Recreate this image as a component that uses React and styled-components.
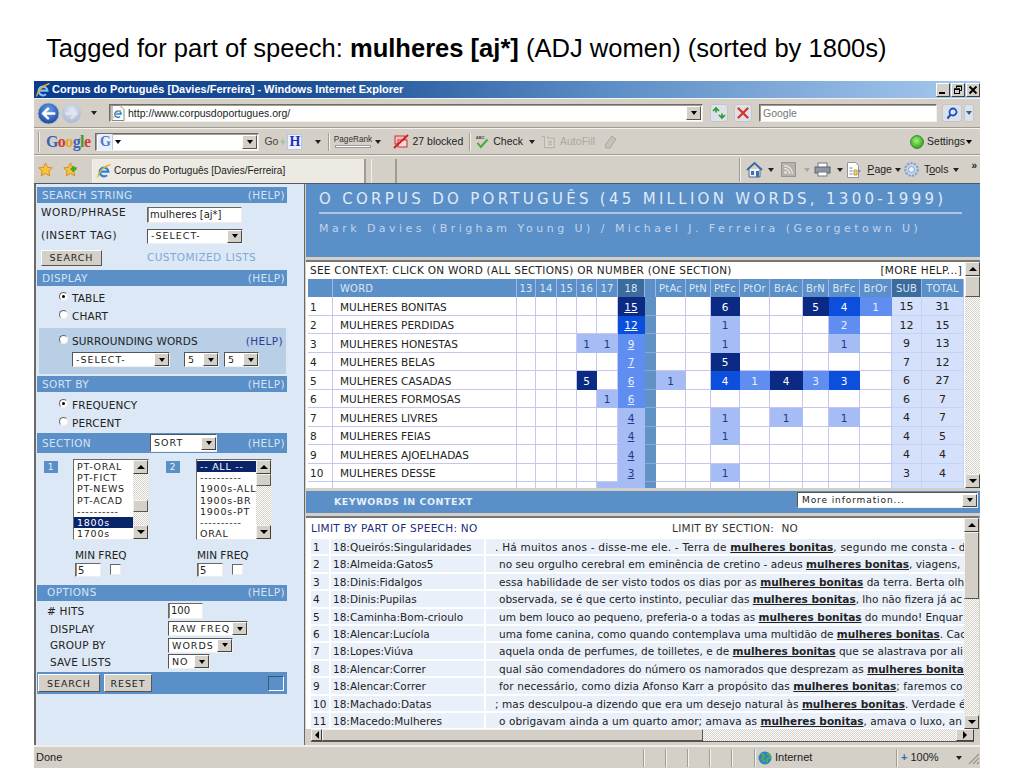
import React from "react";
import styled, { createGlobalStyle, css } from "styled-components";

const Global = createGlobalStyle`
  html, body { margin: 0; padding: 0; background: #fff; }
  body { width: 1024px; height: 768px; overflow: hidden; font-family: "Liberation Sans", Arial, sans-serif; }
  * { box-sizing: border-box; }
`;

const CHROME = '#d4d0c8';
const BLUE = '#5b8fc7';
const UI = '"DejaVu Sans", Verdana, sans-serif';

const Heading = styled.h1`
  margin: 0; height: 81px; padding: 34px 0 0 46px;
  font: 400 25.55px/28px "Liberation Sans", Arial, sans-serif; color: #000; white-space: nowrap;
  b { font-weight: 700; }
`;
const Win = styled.div`
  margin-left: 34px; width: 946px; height: 687px; display: flex; flex-direction: column;
  background: ${CHROME}; overflow: hidden; font-family: "Liberation Sans", Arial, sans-serif;
`;
const Title = styled.div`
  height: 17px; flex: none; display: flex; align-items: center; padding: 0 0 0 1px; gap: 1px;
  background: linear-gradient(90deg, #0a3b8c 0%, #1d5198 30%, #5b8cc4 60%, #a6caf0 100%);
  color: #fff; font: 700 11px/17px "Liberation Sans", sans-serif;
`;
const TitleText = styled.span` flex: 1; `;
const WinBtns = styled.div` display: flex; gap: 1px; `;
const WinBtn = styled.div`
  width: 14px; height: 14px; background: ${CHROME}; border: 1px solid; border-color: #fff #404040 #404040 #fff;
  display: flex; align-items: center; justify-content: center;
`;
const Bar = styled.div`
  flex: none; height: ${p => p.$h}px; display: flex; align-items: center; position: relative;
  border-top: 1px solid #f4f2ec; border-bottom: ${p => p.$flat ? 0 : '1px solid #9d9a90'};
  font-size: 10.5px; color: #222;
`;
const Gap = styled.span` flex: none; width: ${p => p.$w}px; `;
const Grow = styled.span` flex: 1; `;
const Caret = styled.span`
  flex: none; width: 0; height: 0; border: 3px solid transparent; border-top: 4px solid ${p => p.$c || '#222'}; border-bottom: 0;
  margin-left: ${p => p.$ml || 0}px;
`;
const Inset = styled.div`
  flex: none; width: ${p => p.$w}px; height: ${p => p.$h || 18}px; background: #fff; display: flex; align-items: center;
  border: 1px solid; border-color: #6f6c64 #f2f0ea #f2f0ea #6f6c64; box-shadow: inset 1px 1px 0 #a09c92;
  font: 10.5px/1 "Liberation Sans", sans-serif; color: ${p => p.$c || '#222'}; padding-left: ${p => p.$pl || 2}px; overflow: hidden;
`;
const Drop = styled.div`
  flex: none; width: 15px; height: 14px; background: ${CHROME}; border: 1px solid; border-color: #fff #555 #555 #fff;
  display: flex; align-items: center; justify-content: center; margin-left: auto; margin-right: 1px;
`;
const GlassBtn = styled.div`
  flex: none; width: ${p => p.$w || 18}px; height: 18px; border-radius: 3px; background: #dde2ea; border: 1px solid #c3c6ca;
  display: flex; align-items: center; justify-content: center;
`;
const ToolText = styled.span`
  flex: none; font: 10.5px/1 "Liberation Sans", sans-serif; color: ${p => p.$c || '#222'}; white-space: nowrap; margin-left: ${p => p.$ml || 0}px;
  u { text-decoration: underline; }
`;
const Overflow = styled(ToolText)` font-weight: 700; font-size: 10px; margin: -8px 3px 0 0; `;
const GoogleLogo = styled.span`
  flex: none; font: 700 16px/1 "Liberation Serif", serif; letter-spacing: -.6px;
`;
const GLetter = styled.span` color: ${p => p.$c}; `;
const Sep = styled.span` flex: none; width: 2px; height: ${p => p.$h || 18}px; border-left: 1px solid #a09c92; border-right: 1px solid #f4f2ec; `;
const GBoxTile = styled.span`
  flex: none; width: 15px; height: 16px; font: 700 14px/15px "Liberation Serif", serif; color: #4a78d0; text-align: center; background: #e8eefa; border-right: 1px solid #c0c8dc;
`;
const HBtn = styled.span` flex: none; width: 15px; height: 16px; background: #eef2ff; border: 1px solid #b8c4ea; color: #2030c0; font: 700 14px/14px "Liberation Serif", serif; text-align: center; `;
const PageRankBox = styled.span`
  flex: none; display: flex; flex-direction: column; align-items: center; gap: 1px; font: 8.2px/9px "Liberation Sans", sans-serif; width: 39px; color: #333;
`;
const PageRankMeter = styled.span` width: 36px; height: 3px; background: #fff; border: 1px solid #999; `;
const TabItem = styled.div`
  flex: none; width: 274px; height: 24px; align-self: flex-end; background: #eceae3; display: flex; align-items: center; padding-left: 3px; gap: 2px;
  border-right: 2px solid #a09c92; border-left: 1px solid #f4f2ec; font: 10px/1 "Liberation Sans", sans-serif; color: #222;
`;
const NewTab = styled.div` flex: none; width: 26px; height: 24px; align-self: flex-end; border-left: 1px solid #f4f2ec; border-right: 2px solid #a09c92; `;

const Body = styled.div` flex: none; height: 562px; display: flex; border-top: 1px solid #4a5a66; `;
const Left = styled.aside`
  flex: none; width: 271px; background: #dce8f5; border-left: 2px solid #6c6a64; border-right: 1px solid #6c6a64; padding: 3px 0 0 1px;
  font: 10.5px/1 ${UI}; letter-spacing: .55px; color: #222;
`;
const SecBar = styled.div`
  width: 250px; height: ${p => p.$h || 16}px; margin-top: ${p => p.$mt || 0}px; background: ${BLUE}; display: flex; align-items: center; justify-content: space-between;
  padding: 0 2px 0 ${p => p.$pl || 5}px; color: #d5e4f5; font: 10.5px/1 ${UI}; letter-spacing: .4px;
`;
const SecName = styled.span` flex: none; width: 108px; `;
const SecHelp = styled.span` margin-left: auto; `;
const FieldRow = styled.div`
  display: flex; align-items: center; height: ${p => p.$h}px; margin-top: ${p => p.$mt || 0}px; padding-left: ${p => p.$pl || 4}px;
`;
const FieldLabel = styled.span` flex: none; width: ${p => p.$w}px; padding-bottom: ${p => p.$pb || 0}px; `;
const TextBox = styled.div`
  flex: none; width: ${p => p.$w}px; height: ${p => p.$h || 16}px; background: #fff; border: 1px solid; border-color: #6b6860 #eee #eee #6b6860; box-shadow: inset 1px 0 0 #888;
  padding-left: 2px; font: 10px/14px ${UI}; letter-spacing: 0; color: #222;
`;
const SelectBox = styled.div`
  flex: none; width: ${p => p.$w}px; height: ${p => p.$h || 15}px; background: #fff; display: flex; align-items: center; justify-content: space-between;
  border: 1px solid; border-color: #555 #f0f0f0 #f0f0f0 #555; padding-left: 3px; margin-left: ${p => p.$ml || 0}px;
  font: 9.5px/1 ${UI}; letter-spacing: 1px; color: #222;
`;
const ArrowTile = styled.span`
  flex: none; width: 15px; height: 13px; background: ${CHROME}; border: 1px solid; border-color: #fff #444 #444 #fff; margin-right: 0;
  display: flex; align-items: center; justify-content: center;
  &::after { content: ""; border: 3px solid transparent; border-top: 4px solid #000; border-bottom: 0; }
`;
const Btn = styled.div`
  flex: none; width: ${p => p.$w}px; height: ${p => p.$h || 17}px; background: ${CHROME}; border: 1px solid; border-color: #fff #555 #555 #fff;
  display: flex; align-items: center; justify-content: center; font: 9.5px/1 ${UI}; letter-spacing: .9px; color: #222;
`;
const CustomLink = styled.span` margin-left: 45px; color: #7fa8d8; letter-spacing: .42px; font-size: 10.5px; `;
const VSpace = styled.div` height: ${p => p.$h}px; `;
const RadioRow = styled.label`
  display: flex; align-items: center; height: ${p => p.$h || 18}px; padding-left: ${p => p.$pl || 22}px; gap: 4px; letter-spacing: .15px;
`;
const Radio = styled.span`
  flex: none; width: 9px; height: 9px; border-radius: 50%; background: #fff; border: 1px solid; border-color: #666 #eee #eee #666; position: relative; top: -2px;
  ${p => p.$on && css`&::after { content: ""; position: absolute; left: 2px; top: 2px; width: 3px; height: 3px; border-radius: 50%; background: #000; }`}
`;
const SurroundBox = styled.div`
  width: 247px; height: 46px; margin: 3px 0 2px 2px; background: #b8cfe6; padding-top: 6px;
`;
const SurroundHead = styled.div` display: flex; align-items: center; padding-left: 20px; height: 14px; gap: 4px; letter-spacing: .1px; `;
const NavyHelp = styled.span` color: #2a3f9a; margin-left: auto; margin-right: 3px; letter-spacing: .4px; `;
const SurroundSelects = styled.div` display: flex; margin: 4px 0 0 33px; `;
const Lists = styled.div` display: flex; height: 81px; margin: 6px 0 0 7px; `;
const ListCol = styled.div` flex: none; width: 122px; display: flex; align-items: flex-start; `;
const Badge = styled.span`
  flex: none; width: 14px; height: 12px; margin-top: 2px; background: ${BLUE}; color: #e4effa; font: 9px/12px ${UI}; text-align: center;
`;
const ListBox = styled.div`
  flex: none; width: 76px; height: 81px; margin-left: ${p => p.$ml}px; background: #fff; display: flex; border: 1px solid; border-color: #6b6860 #e8e8e8 #e8e8e8 #6b6860;
`;
const ListItems = styled.div` flex: 1; min-width: 0; padding: 1px 0 0 0; overflow: hidden; `;
const ListOpt = styled.div`
  height: 11.2px; padding-left: 3px; font: 9.5px/11.2px ${UI}; letter-spacing: .75px; white-space: nowrap;
  ${p => p.$on ? 'background:#0a246a;color:#fff;' : 'color:#222;'}
`;
const MinRow = styled.div` display: flex; margin: 10px 0 0 0; `;
const MinCol = styled.div` flex: none; width: 122px; padding-left: ${p => p.$pl}px; letter-spacing: 0; `;
const MinInputs = styled.div` display: flex; align-items: center; gap: 9px; margin-top: 2px; `;
const Check = styled.span` flex: none; width: 11px; height: 11px; background: #fff; border: 1px solid; border-color: #666 #eee #eee #666; `;
const OptRow = styled.div` display: flex; align-items: center; height: ${p => p.$h || 16.6}px; margin-top: ${p => p.$mt || 0}px; padding-left: ${p => p.$pl || 13}px; letter-spacing: .2px; `;
const OptLabel = styled.span` flex: none; width: ${p => 131 - (p.$pl || 13)}px; `;
const ActionBar = styled.div`
  width: 250px; height: 22px; margin-top: 2px; background: ${BLUE}; display: flex; align-items: center; padding: 0 3px 0 1px; gap: 4px;
`;
const Square = styled.span` flex: none; width: 16px; height: 15px; margin-left: auto; background: ${BLUE}; border: 1px solid; border-color: #34587e #fff #fff #34587e; `;

const Right = styled.main` flex: 1; min-width: 0; display: flex; flex-direction: column; padding-left: 1px; background: ${CHROME}; `;
const TopBanner = styled.header`
  flex: none; height: 73px; background: ${BLUE}; padding: 7px 0 0 13px; color: #dfeafa;
`;
const BannerTitle = styled.div` font: 15px/17px ${UI}; letter-spacing: 3.29px; white-space: nowrap; padding-bottom: 4px; width: 643px; border-bottom: 2px solid #a9c6e6; `;
const BannerSub = styled.div` font: 11px/14px ${UI}; letter-spacing: 3.46px; color: #c0d4ec; margin-top: 8px; white-space: nowrap; `;
const TableFrame = styled.section`
  flex: none; height: 228px; margin-top: 3px; display: flex; background: #fff; border-top: 2px solid #777; overflow: hidden;
`;
const TableMain = styled.div` flex: none; width: 659px; padding-left: 2px; font: 10.5px/1 ${UI}; color: #222; `;
const SeeRow = styled.div` height: 17px; display: flex; align-items: center; justify-content: space-between; padding: 0 3px 0 2px; letter-spacing: .26px; `;
const Grid = styled.div`
  display: grid; grid-template-columns: 25px 184px 19px 21px 20px 20px 21px 27px 11px 30px 25px 29px 30px 33px 26px 31px 32px 30px 42px;
  grid-template-rows: 18px; grid-auto-rows: 18.5px; width: 656px;
`;
const TONES = {
  d: 'background:#0a2a84;color:#fff;border-color:#0a2a84;',
  s: 'background:#0c4fdc;color:#fff;border-color:#0c4fdc;',
  m: 'background:#5f8df0;color:#e8f0ff;border-color:#5f8df0;',
  l: 'background:#a5bcf5;color:#1d3a86;border-color:#a5bcf5;',
};
const HeadCell = styled.div`
  background: ${p => p.$dark ? '#3c6c9c' : BLUE}; color: #dbe7f6; border-right: 1px solid #9db5f0; display: flex; align-items: center; padding-top: 2px;
  justify-content: ${p => p.$left ? 'flex-start' : 'center'}; padding-left: ${p => p.$left ? 7 : 0}px; letter-spacing: .2px; font-size: 10px;
`;
const Cell = styled.div`
  display: flex; align-items: center; justify-content: ${p => p.$left ? 'flex-start' : 'center'}; padding-left: ${p => p.$pl || 0}px; padding-top: 2px;
  border-right: 1px solid #c9c5ef; border-bottom: 1px solid #c9c5ef; background: #fff; white-space: nowrap;
  ${p => p.$tone && TONES[p.$tone]}
  ${p => p.$spacer && `background:#6092c6;border-right:0;border-bottom:1px solid #85a8d4;`}
  ${p => p.$sum && `background:#d5e0fa;color:#222;border-right:1px solid #c4d2f6;border-bottom:1px solid #c4d2f6;font-size:11px;`}
  u { text-decoration: underline; }
`;
const VBar = styled.div` flex: none; width: ${p => p.$w || 15}px; display: flex; flex-direction: column; background: repeating-conic-gradient(#d4d0c8 0 25%, #fff 0 50%) 0 0/2px 2px; `;
const VTrack = styled.div` flex: 1; min-height: 0; `;
const Thumb = styled.div`
  height: ${p => p.$h}px; margin-top: ${p => p.$top}px; background: ${CHROME}; border: 1px solid; border-color: #f4f2ec #555 #555 #f4f2ec;
`;
const ScrollBtn = styled.div`
  flex: none; width: ${p => p.$w || 15}px; height: ${p => p.$hh || 14}px; background: ${CHROME}; border: 1px solid; border-color: #f4f2ec #404040 #404040 #f4f2ec;
  display: flex; align-items: center; justify-content: center;
  &::after { content: ""; border: 4px solid transparent;
    ${p => p.$dir === 'up' && 'border-bottom:4px solid #000;border-top:0;'}
    ${p => p.$dir === 'down' && 'border-top:4px solid #000;border-bottom:0;'}
    ${p => p.$dir === 'left' && 'border-right:4px solid #000;border-left:0;'}
    ${p => p.$dir === 'right' && 'border-left:4px solid #000;border-right:0;'}
  }
`;
const KwicBar = styled.div`
  flex: none; height: 22px; margin-top: 3px; background: ${BLUE}; display: flex; padding: 1px 2px 0 28px; justify-content: space-between; align-items: flex-start;
  color: #e6effa;
`;
const KwicTitle = styled.span` font: 700 9.5px/20px ${UI}; letter-spacing: .5px; `;
const MoreSel = styled(SelectBox)` font-size: 9px; letter-spacing: .9px; height: 16px; padding-left: 4px; `;
const KwicFrame = styled.section`
  flex: 1; min-height: 0; margin-top: 3px; display: flex; flex-direction: column; background: ${CHROME}; border-top: 2px solid #777; border-right: 1px solid ${CHROME}; padding-bottom: 3px;
`;
const KwicTop = styled.div` flex: 1; min-height: 0; display: flex; background: #fff; `;
const KwicMain = styled.div` flex: none; width: 658px; padding: 3px 0 0 5px; overflow: hidden; font: 10.5px/1 ${UI}; color: #222; `;
const LimitRow = styled.div` height: 14px; display: flex; align-items: center; color: #222a7e; margin-bottom: 4px; letter-spacing: .3px; `;
const LimitLeft = styled.span` flex: none; width: 361px; `;
const LimitRight = styled.span` color: #333; letter-spacing: .3px; `;
const KwicRow = styled.div` display: grid; grid-template-columns: 18px 153px 480px; column-gap: 2px; height: 15.4px; margin-bottom: 2px; `;
const KwicCell = styled.div`
  background: #eaf0f9; padding: 1px 0 0 ${p => p.$pl || 2}px; white-space: nowrap; overflow: hidden; line-height: 14.4px; letter-spacing: ${p => p.$ls || 0}px;
  b { font-weight: 700; text-decoration: underline; letter-spacing: 0; }
`;
const HBar = styled.div`
  flex: none; height: 13px; display: flex; margin-left: 5px; width: 663px; background: repeating-conic-gradient(#d4d0c8 0 25%, #fff 0 50%) 0 0/2px 2px; border-bottom: 1px solid #555;
`;
const HThumb = styled.div` flex: none; width: 381px; background: ${CHROME}; border: 1px solid; border-color: #f4f2ec #555 #555 #f4f2ec; `;
const Status = styled.footer`
  flex: 1; display: flex; align-items: center; border-top: 2px solid #f0eee8; font: 11px/1 "Liberation Sans", sans-serif; color: #222; padding: 0 0 0 2px;
`;
const DoneText = styled.span` flex: none; width: 607px; `;
const StatusCell = styled.span`
  flex: none; width: ${p => p.$w}px; height: 18px; border-left: 1px solid #a09c92; box-shadow: inset 1px 0 0 #f4f2ec; display: flex; align-items: center; gap: 3px; padding-left: ${p => p.$pl || 0}px;
`;
const ZoomPlus = styled.span` color: #2a6fc0; font-weight: 700; `;

const Ie = ({ s = 14, c = '#2b80d8' }) => (
  <svg width={s} height={s} viewBox="0 0 16 16" style={{ flex: 'none' }}>
    <path d="M4 8.6h8.4A4.4 4.4 0 1 0 11 12.2" fill="none" stroke={c} strokeWidth="2.2" />
    <path d="M1.5 14.5C2 10 7 3.5 14.5 1.5" fill="none" stroke="#eeb02c" strokeWidth="1.3" />
  </svg>
);
const NavBall = ({ dim, s = 23, dir = 'l' }) => (
  <svg width={s} height={s} viewBox="0 0 24 24" style={{ flex: 'none' }}>
    <defs>
      <radialGradient id={dim ? 'nd' : 'nb'} cx=".5" cy=".35" r=".7">
        <stop offset="0" stopColor={dim ? '#e4e9f2' : '#6fa2e8'} />
        <stop offset="1" stopColor={dim ? '#a3b3cb' : '#123f9c'} />
      </radialGradient>
    </defs>
    <circle cx="12" cy="12" r="11" fill={`url(#${dim ? 'nd' : 'nb'})`} stroke={dim ? '#c4ccd8' : '#a9b6cc'} />
    <path d="M18 12H7M11.5 7L6.5 12l5 5" fill="none" stroke={dim ? '#dfe6f2' : '#fff'} strokeWidth="2.6" strokeLinecap="round" transform={dir === 'r' ? 'matrix(-1 0 0 1 24 0)' : undefined} />
  </svg>
);
const PageIe = () => (
  <svg width="14" height="16" viewBox="0 0 14 16" style={{ flex: 'none' }}>
    <path d="M1 .5h8l4 4v11H1z" fill="#fff" stroke="#888" />
    <path d="M4 9h6.2A3.2 3.2 0 1 0 9.2 11.5" fill="none" stroke="#2b80d8" strokeWidth="1.5" />
    <path d="M2.5 13C3.5 9.5 6 6.5 10.5 5" fill="none" stroke="#eeb02c" />
  </svg>
);
const Refresh = () => (
  <svg width="14" height="14" viewBox="0 0 14 14"><path d="M1 5l3-3 3 3M4 2.5v4M13 9l-3 3-3-3M10 11.5v-4" fill="none" stroke="#2c9a3a" strokeWidth="1.7" /></svg>
);
const Stop = () => (
  <svg width="12" height="12" viewBox="0 0 12 12"><path d="M1.5 1.5l9 9M10.5 1.5l-9 9" stroke="#d9352a" strokeWidth="2.4" strokeLinecap="round" /></svg>
);
const Glass = () => (
  <svg width="12" height="13" viewBox="0 0 12 13"><circle cx="7" cy="5" r="3.5" fill="#dbe8fb" stroke="#1b50c4" strokeWidth="1.8" /><path d="M4.5 7.6L1.5 11.5" stroke="#1b50c4" strokeWidth="2.2" /></svg>
);
const Leaf = () => (
  <svg width="8" height="10" viewBox="0 0 8 10" style={{ flex: 'none' }}><path d="M1 5c2-1 2-3 3-4 0 2 1 3 3 4-2 1-3 2-3 4-1-2-1-3-3-4z" fill="#a9c4a2" /></svg>
);
const Blocked = () => (
  <svg width="16" height="16" viewBox="0 0 16 16" style={{ flex: 'none' }}>
    <rect x="2" y="2" width="10" height="8" fill="#f2c0c0" stroke="#cc3030" />
    <rect x="5" y="6" width="9" height="7" fill="#f8d8d8" stroke="#cc3030" />
    <path d="M1 14L15 1" stroke="#d02020" strokeWidth="2" />
  </svg>
);
const CheckIcon = () => (
  <svg width="15" height="16" viewBox="0 0 18 16" style={{ flex: 'none' }}>
    <text x="1" y="5" fontSize="5" fontFamily="Liberation Sans" fontWeight="700" fill="#444">ABC</text>
    <path d="M3 9l4 5 8-9" fill="none" stroke="#4da838" strokeWidth="2.4" />
  </svg>
);
const AutoFillIcon = () => (
  <svg width="15" height="16" viewBox="0 0 16 16" style={{ flex: 'none' }}>
    <path d="M1 2l3 0 0 12 10 0 0-10-7 0 0-2" fill="#dedbd3" stroke="#aaa79e" /><path d="M7 7h5M7 9h5M7 11h5" stroke="#aaa79e" />
  </svg>
);
const Eraser = () => (
  <svg width="16" height="16" viewBox="0 0 16 16" style={{ flex: 'none' }}><path d="M3 11l7-9 4 3-6 9H4z" fill="#c4c1b9" stroke="#aaa79e" /></svg>
);
const GreenDot = () => (
  <svg width="14" height="14" viewBox="0 0 14 14" style={{ flex: 'none' }}>
    <defs><radialGradient id="gd" cx=".45" cy=".4" r=".6"><stop offset="0" stopColor="#a4f07a" /><stop offset="1" stopColor="#2fa31a" /></radialGradient></defs>
    <circle cx="7" cy="7" r="6.4" fill="url(#gd)" stroke="#2c8f2a" />
  </svg>
);
const Star = ({ plus }) => (
  <svg width="15" height="15" viewBox="0 0 16 16" style={{ flex: 'none' }}>
    <path d="M8 1l2.2 4.6 5 .7-3.6 3.4.9 5L8 12.3l-4.5 2.4.9-5L.8 6.3l5-.7z" fill="#f7c43a" stroke="#d68a1c" />
    {plus && <path d="M8 7.5h6M11 4.5v6" stroke="#3eaa2c" strokeWidth="2.6" />}
  </svg>
);
const Home = () => (
  <svg width="17" height="17" viewBox="0 0 17 17" style={{ flex: 'none' }}>
    <path d="M3 8v8h11V8" fill="#eef0f4" stroke="#5c6a80" /><path d="M1 9l7.5-7L16 9" fill="none" stroke="#3a6aa8" strokeWidth="2" /><rect x="5" y="10" width="3" height="4" fill="#3a70b8" /><rect x="10" y="10" width="3" height="6" fill="#3a70b8" />
  </svg>
);
const Rss = () => (
  <svg width="15" height="15" viewBox="0 0 15 15" style={{ flex: 'none' }}>
    <rect x=".5" y=".5" width="14" height="14" fill="#b4b2aa" stroke="#98968e" /><circle cx="4.5" cy="10.5" r="1.4" fill="#e6e4de" /><path d="M3 6.5a5.5 5.5 0 0 1 5.5 5.5M3 3.5A8.5 8.5 0 0 1 11.5 12" fill="none" stroke="#e6e4de" strokeWidth="1.4" />
  </svg>
);
const Printer = () => (
  <svg width="17" height="15" viewBox="0 0 17 15" style={{ flex: 'none' }}>
    <rect x="4" y="1" width="9" height="5" fill="#fff" stroke="#777" /><rect x="1" y="5" width="15" height="6" fill="#8d96a6" stroke="#5a6270" /><rect x="4" y="10" width="9" height="4" fill="#fff" stroke="#777" />
  </svg>
);
const PageIcon = () => (
  <svg width="16" height="16" viewBox="0 0 16 16" style={{ flex: 'none' }}>
    <path d="M1.5 .5h8l3 3v12h-11z" fill="#fff" stroke="#8c98aa" /><path d="M3.5 6h3M3.5 9h3M3.5 12h3" stroke="#7a8aa4" /><path d="M8 8h3v5H8z" fill="#f2d67c" stroke="#b99a3c" /><path d="M12 7l3 2-3 2z" fill="#7a8aa4" />
  </svg>
);
const Gear = () => (
  <svg width="17" height="17" viewBox="0 0 17 17" style={{ flex: 'none' }}>
    <circle cx="8.5" cy="8.5" r="6.2" fill="#cfdcef" stroke="#8ba6cc" strokeWidth="2.4" strokeDasharray="2.4 1" /><circle cx="8.5" cy="8.5" r="3" fill="#f0f4fa" stroke="#7f9cc6" />
  </svg>
);
const Globe = () => (
  <svg width="14" height="14" viewBox="0 0 14 14" style={{ flex: 'none' }}>
    <circle cx="7" cy="7" r="6.5" fill="#2f7fd0" /><path d="M3 3c2 0 3 1 3 2S4 7 4 8s2 1 2 3M9 2c1 1 3 2 3 4s-2 1-3 2 0 3 1 3" fill="none" stroke="#4fb04a" strokeWidth="2" />
  </svg>
);
const Grip = () => (
  <svg width="14" height="14" viewBox="0 0 14 14" style={{ flex: 'none' }}><path d="M13 3L3 13M13 7l-6 6M13 11l-2 2" stroke="#98958c" strokeWidth="1.2" /></svg>
);
const MinGlyph = () => (
  <svg width="10" height="10" viewBox="0 0 10 10"><path d="M1 8h6" stroke="#000" strokeWidth="2" /></svg>
);
const RestoreGlyph = () => (
  <svg width="10" height="10" viewBox="0 0 10 10"><path d="M3.5 1.5h5v4h-2M3.5 1v2" fill="none" stroke="#000" /><rect x="1.5" y="4" width="5" height="4.5" fill="none" stroke="#000" /><path d="M1 4.3h6M3 1.3h6" stroke="#000" strokeWidth="1.4" /></svg>
);
const CloseGlyph = () => (
  <svg width="10" height="10" viewBox="0 0 10 10"><path d="M1.5 1.5l7 7M8.5 1.5l-7 7" stroke="#000" strokeWidth="1.9" /></svg>
);

const COLS = ['13', '14', '15', '16', '17', '18', '', 'PtAc', 'PtN', 'PtFc', 'PtOr', 'BrAc', 'BrN', 'BrFc', 'BrOr'];
const ROWS = [
  { w: 'MULHERES BONITAS', c: { 18: [15, 'd'], PtFc: [6, 'd'], BrN: [5, 'd'], BrFc: [4, 's'], BrOr: [1, 'm'] }, sub: 15, tot: 31 },
  { w: 'MULHERES PERDIDAS', c: { 18: [12, 's'], PtFc: [1, 'l'], BrFc: [2, 'm'] }, sub: 12, tot: 15 },
  { w: 'MULHERES HONESTAS', c: { 16: [1, 'l'], 17: [1, 'l'], 18: [9, 'm'], PtFc: [1, 'l'], BrFc: [1, 'l'] }, sub: 9, tot: 13 },
  { w: 'MULHERES BELAS', c: { 18: [7, 'm'], PtFc: [5, 'd'] }, sub: 7, tot: 12 },
  { w: 'MULHERES CASADAS', c: { 16: [5, 'd'], 18: [6, 'm'], PtAc: [1, 'l'], PtFc: [4, 's'], PtOr: [1, 'm'], BrAc: [4, 'd'], BrN: [3, 'm'], BrFc: [3, 's'] }, sub: 6, tot: 27 },
  { w: 'MULHERES FORMOSAS', c: { 17: [1, 'l'], 18: [6, 'm'] }, sub: 6, tot: 7 },
  { w: 'MULHERES LIVRES', c: { 18: [4, 'l'], PtFc: [1, 'l'], BrAc: [1, 'l'], BrFc: [1, 'l'] }, sub: 4, tot: 7 },
  { w: 'MULHERES FEIAS', c: { 18: [4, 'l'], PtFc: [1, 'l'] }, sub: 4, tot: 5 },
  { w: 'MULHERES AJOELHADAS', c: { 18: [4, 'l'] }, sub: 4, tot: 4 },
  { w: 'MULHERES DESSE', c: { 18: [3, 'l'], PtFc: [1, 'l'] }, sub: 3, tot: 4 },
  { w: '', c: { 17: ['', 'l'], 18: ['', 'l'] }, sub: '', tot: '' },
];
const KWIC = [
  ['18:Queirós:Singularidades', 9, 0.23, '. Há muitos anos - disse-me ele. - Terra de ', ', segundo me consta - di'],
  ['18:Almeida:Gatos5', 13, 0.05, 'no seu orgulho cerebral em eminência de cretino - adeus ', ', viagens, '],
  ['18:Dinis:Fidalgos', 13, 0.06, 'essa habilidade de ser visto todos os dias por as ', ' da terra. Berta olh'],
  ['18:Dinis:Pupilas', 13, 0, 'observada, se é que certo instinto, peculiar das ', ', lho não fizera já ac'],
  ['18:Caminha:Bom-crioulo', 13, 0, 'um bem louco ao pequeno, preferia-o a todas as ', ' do mundo! Enquar'],
  ['18:Alencar:Lucíola', 13, 0, 'uma fome canina, como quando contemplava uma multidão de ', '. Cac'],
  ['18:Lopes:Viúva', 13, 0.02, 'aquela onda de perfumes, de toilletes, e de ', ' que se alastrava por ali'],
  ['18:Alencar:Correr', 13, 0.03, 'qual são comendadores do número os namorados que desprezam as ', ''],
  ['18:Alencar:Correr', 13, 0.1, 'for necessário, como dizia Afonso Karr a propósito das ', '; faremos co'],
  ['18:Machado:Datas', 9, 0.09, '; mas desculpou-a dizendo que era um desejo natural às ', '. Verdade é'],
  ['18:Macedo:Mulheres', 13, 0.07, 'o obrigavam ainda a um quarto amor; amava as ', ', amava o luxo, an'],
];

const VScroll = ({ top, h, w, hh }) => (
  <VBar $w={w}>
    <ScrollBtn $dir="up" $w={w} $hh={hh} />
    <VTrack><Thumb $top={top} $h={h} /></VTrack>
    <ScrollBtn $dir="down" $w={w} $hh={hh} />
  </VBar>
);
const Sel = ({ w, children, ml, h }) => (
  <SelectBox $w={w} $ml={ml} $h={h}><span>{children}</span><ArrowTile /></SelectBox>
);
const Section = ({ name, pl }) => (
  <SecBar $pl={pl}><span>{name}</span><span>(HELP)</span></SecBar>
);

export default function App() {
  return (
    <>
      <Global />
      <Heading>Tagged for part of speech: <b>mulheres [aj*]</b> (ADJ women) (sorted by 1800s)</Heading>
      <Win>
        <Title>
          <Ie s={16} c="#7fc0f4" />
          <TitleText>Corpus do Português [Davies/Ferreira] - Windows Internet Explorer</TitleText>
          <WinBtns><WinBtn><MinGlyph /></WinBtn><WinBtn><RestoreGlyph /></WinBtn><WinBtn><CloseGlyph /></WinBtn></WinBtns>
        </Title>
        <Bar $h={30}>
          <Gap $w={3} /><NavBall /><Gap $w={1} /><NavBall dim dir="r" s={21} /><Caret $ml={9} /><Gap $w={12} />
          <Inset $w={594} $pl={1}>
            <PageIe /><Gap $w={3} />http://www.corpusdoportugues.org/<Drop><Caret $c="#000" /></Drop>
          </Inset>
          <Gap $w={7} /><GlassBtn><Refresh /></GlassBtn><Gap $w={6} /><GlassBtn><Stop /></GlassBtn><Gap $w={7} />
          <Inset $w={178} $c="#777" $pl={3}>Google</Inset>
          <Gap $w={5} /><GlassBtn $w={20}><Glass /></GlassBtn><Gap $w={2} /><GlassBtn $w={10}><Caret $c="#3a5aa0" /></GlassBtn>
        </Bar>
        <Bar $h={27}>
          <Gap $w={4} /><Sep $h={20} /><Gap $w={6} />
          <GoogleLogo><GLetter $c="#3a63b8">G</GLetter><GLetter $c="#d43d2e">o</GLetter><GLetter $c="#e0a820">o</GLetter><GLetter $c="#3a63b8">g</GLetter><GLetter $c="#3f9a3a">l</GLetter><GLetter $c="#d43d2e">e</GLetter></GoogleLogo>
          <Gap $w={5} />
          <Inset $w={164} $pl={0}><GBoxTile>G</GBoxTile><Caret $c="#000" $ml={2} /><Drop><Caret $c="#000" /></Drop></Inset>
          <ToolText $ml={5} $c="#444">Go</ToolText><Gap $w={1} /><Leaf /><HBtn>H</HBtn><Caret $ml={13} /><Gap $w={7} /><Sep /><Gap $w={3} />
          <PageRankBox>PageRank<PageRankMeter /></PageRankBox><Caret $ml={3} /><Gap $w={12} /><Blocked /><ToolText $ml={3}>27 blocked</ToolText><Gap $w={6} /><Sep /><Gap $w={4} />
          <CheckIcon /><ToolText $ml={3}>Check</ToolText><Caret $ml={6} /><Gap $w={6} /><AutoFillIcon /><ToolText $ml={4} $c="#aaa79e">AutoFill</ToolText><Gap $w={7} /><Eraser />
          <Grow /><GreenDot /><ToolText $ml={3}>Settings</ToolText><Caret $c="#000" $ml={1} /><Gap $w={8} />
        </Bar>
        <Bar $h={28} $flat>
          <Gap $w={4} /><Star /><Gap $w={10} /><Star plus /><Gap $w={14} />
          <TabItem><Ie s={16} /><span>Corpus do Português [Davies/Ferreira]</span></TabItem>
          <Gap $w={5} /><NewTab />
          <Grow />
          <Sep $h={24} /><Gap $w={5} /><Home /><Caret $ml={5} /><Gap $w={7} /><Rss /><Caret $c="#aaa79e" $ml={8} /><Gap $w={4} /><Printer /><Caret $ml={6} /><Gap $w={3} /><PageIcon />
          <ToolText $ml={5}><u>P</u>age</ToolText><Caret $ml={3} /><Gap $w={2} /><Gear /><ToolText $ml={4}>T<u>o</u>ols</ToolText><Caret $ml={5} /><Gap $w={12} />
          <Overflow>»</Overflow>
        </Bar>
        <Body>
          <Left>
            <Section name="SEARCH STRING" />
            <FieldRow $h={19} $mt={2}><FieldLabel $w={106} $pb={4}>WORD/PHRASE</FieldLabel><TextBox $w={95}>mulheres [aj*]</TextBox></FieldRow>
            <FieldRow $h={16} $mt={4}><FieldLabel $w={106} $pb={2}>(INSERT TAG)</FieldLabel><Sel w={96}>-SELECT-</Sel></FieldRow>
            <FieldRow $h={17} $mt={5}><Btn $w={61} $h={16}>SEARCH</Btn><CustomLink>CUSTOMIZED LISTS</CustomLink></FieldRow>
            <SecBar $mt={4} $h={16}><span>DISPLAY</span><span>(HELP)</span></SecBar>
            <VSpace $h={3} />
            <RadioRow><Radio $on />TABLE</RadioRow>
            <RadioRow><Radio />CHART</RadioRow>
            <SurroundBox>
              <SurroundHead><Radio />SURROUNDING WORDS<NavyHelp>(HELP)</NavyHelp></SurroundHead>
              <SurroundSelects><Sel w={98}>-SELECT-</Sel><Sel w={35} ml={14}>5</Sel><Sel w={35} ml={5}>5</Sel></SurroundSelects>
            </SurroundBox>
            <Section name="SORT BY" />
            <VSpace $h={4} />
            <RadioRow><Radio $on />FREQUENCY</RadioRow>
            <RadioRow><Radio />PERCENT</RadioRow>
            <SecBar $h={20} $mt={1}>
              <SecName>SECTION</SecName><SelectBox $w={67} $h={18}><span>SORT</span><ArrowTile /></SelectBox><SecHelp>(HELP)</SecHelp>
            </SecBar>
            <Lists>
              <ListCol>
                <Badge>1</Badge>
                <ListBox $ml={15}>
                  <ListItems>
                    <ListOpt>PT-ORAL</ListOpt><ListOpt>PT-FICT</ListOpt><ListOpt>PT-NEWS</ListOpt><ListOpt>PT-ACAD</ListOpt><ListOpt>----------</ListOpt><ListOpt $on>1800s</ListOpt><ListOpt>1700s</ListOpt>
                  </ListItems>
                  <VScroll top={26} h={12} w={15} hh={14} />
                </ListBox>
              </ListCol>
              <ListCol>
                <Badge>2</Badge>
                <ListBox $ml={16}>
                  <ListItems>
                    <ListOpt $on>-- ALL --</ListOpt><ListOpt>----------</ListOpt><ListOpt>1900s-ALL</ListOpt><ListOpt>1900s-BR</ListOpt><ListOpt>1900s-PT</ListOpt><ListOpt>----------</ListOpt><ListOpt>ORAL</ListOpt>
                  </ListItems>
                  <VScroll top={0} h={12} w={15} hh={14} />
                </ListBox>
              </ListCol>
            </Lists>
            <MinRow>
              <MinCol $pl={38}>MIN FREQ<MinInputs><TextBox $w={26} $h={14}>5</TextBox><Check /></MinInputs></MinCol>
              <MinCol $pl={38}>MIN FREQ<MinInputs><TextBox $w={26} $h={14}>5</TextBox><Check /></MinInputs></MinCol>
            </MinRow>
            <VSpace $h={8} />
            <Section name="OPTIONS" pl={10} />
            <OptRow $pl={10} $h={19} $mt={1}><OptLabel $pl={10}># HITS</OptLabel><TextBox $w={35}>100</TextBox></OptRow>
            <OptRow><OptLabel>DISPLAY</OptLabel><Sel w={80}>RAW FREQ</Sel></OptRow>
            <OptRow><OptLabel>GROUP BY</OptLabel><Sel w={65}>WORDS</Sel></OptRow>
            <OptRow><OptLabel>SAVE LISTS</OptLabel><Sel w={42}>NO</Sel></OptRow>
            <ActionBar><Btn $w={62} $h={18}>SEARCH</Btn><Btn $w={48} $h={18}>RESET</Btn><Square /></ActionBar>
          </Left>
          <Right>
            <TopBanner>
              <BannerTitle>O CORPUS DO PORTUGUÊS (45 MILLION WORDS, 1300-1999)</BannerTitle>
              <BannerSub>Mark Davies (Brigham Young U) / Michael J. Ferreira (Georgetown U)</BannerSub>
            </TopBanner>
            <TableFrame>
              <TableMain>
                <SeeRow><span>SEE CONTEXT: CLICK ON WORD (ALL SECTIONS) OR NUMBER (ONE SECTION)</span><span>[MORE HELP...]</span></SeeRow>
                <Grid>
                  <HeadCell />
                  <HeadCell $left>WORD</HeadCell>
                  {COLS.map((c, i) => <HeadCell key={i} $dark={c === '18'}>{c}</HeadCell>)}
                  <HeadCell $dark>SUB</HeadCell>
                  <HeadCell>TOTAL</HeadCell>
                  {ROWS.map((r, i) => (
                    <React.Fragment key={i}>
                      <Cell $left $pl={2}>{r.w ? i + 1 : ''}</Cell>
                      <Cell $left $pl={7}>{r.w}</Cell>
                      {COLS.map((c, j) => {
                        if (c === '') return <Cell key={j} $spacer />;
                        const v = r.c[c];
                        if (!v) return <Cell key={j} />;
                        return <Cell key={j} $tone={v[1]}>{c === '18' && v[0] !== '' ? <u>{v[0]}</u> : v[0]}</Cell>;
                      })}
                      <Cell $sum>{r.sub}</Cell>
                      <Cell $sum>{r.tot}</Cell>
                    </React.Fragment>
                  ))}
                </Grid>
              </TableMain>
              <VScroll top={0} h={21} />
            </TableFrame>
            <KwicBar>
              <KwicTitle>KEYWORDS IN CONTEXT</KwicTitle>
              <MoreSel $w={181}><span>More information...</span><ArrowTile /></MoreSel>
            </KwicBar>
            <KwicFrame>
              <KwicTop>
                <KwicMain>
                  <LimitRow><LimitLeft>LIMIT BY PART OF SPEECH: NO</LimitLeft><LimitRight>LIMIT BY SECTION:&nbsp; NO</LimitRight></LimitRow>
                  {KWIC.map((k, i) => (
                    <KwicRow key={i}>
                      <KwicCell>{i + 1}</KwicCell>
                      <KwicCell>{k[0]}</KwicCell>
                      <KwicCell $pl={k[1]} $ls={k[2]}>{k[3]}<b>mulheres bonitas</b>{k[4]}</KwicCell>
                    </KwicRow>
                  ))}
                </KwicMain>
                <VScroll top={0} h={67} />
              </KwicTop>
              <HBar>
                <ScrollBtn $dir="left" $w={11} $hh={12} />
                <HThumb />
                <Grow />
                <ScrollBtn $dir="right" $w={18} $hh={12} />
              </HBar>
            </KwicFrame>
          </Right>
        </Body>
        <Status>
          <DoneText>Done</DoneText>
          {[22, 22, 22, 22, 23].map((w, i) => <StatusCell key={i} $w={w} />)}
          <StatusCell $w={142} $pl={3}><Globe /><span>Internet</span></StatusCell>
          <StatusCell $w={65} $pl={4}><ZoomPlus>+</ZoomPlus>100%<Caret $ml={14} /></StatusCell>
          <Grow /><Grip />
        </Status>
      </Win>
    </>
  );
}
